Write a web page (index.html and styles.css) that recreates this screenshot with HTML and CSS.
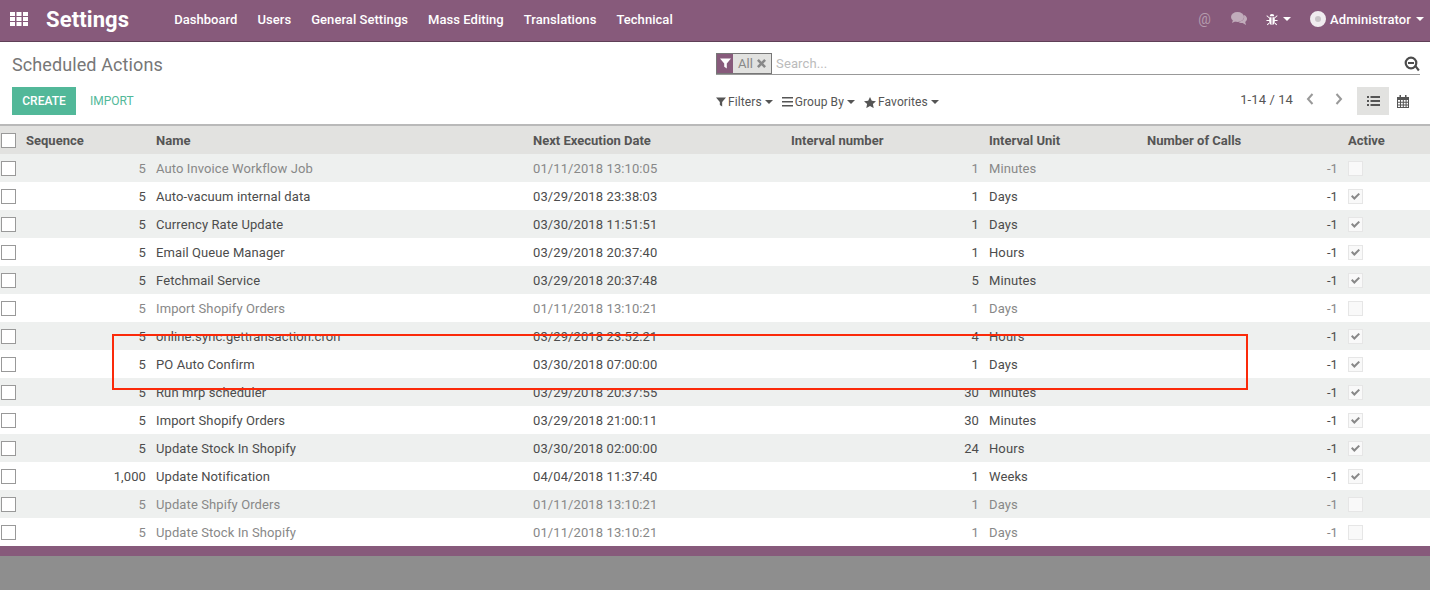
FILE: index.html
```html
<!DOCTYPE html>
<html lang="en">
<head>
    <meta charset="UTF-8">
    <meta name="viewport" content="width=device-width, initial-scale=1.0">
    <title>Scheduled Actions - Settings</title>
    <link rel="stylesheet" href="styles.css">
</head>
<body>
    <svg class="defs" width="0" height="0">
        <symbol id="caret" viewBox="0 0 8 4"><path d="M0 0h8L4 4z"/></symbol>
        <symbol id="filter" viewBox="0 0 12 12"><path d="M0 .5h12L7.4 6v5.5L4.6 9.6V6z"/></symbol>
        <symbol id="check" viewBox="0 0 12 10"><path d="M1 5l1.6-1.6L4.7 5.500 9.400 1 11 2.600 4.700 9z"/></symbol>
    </svg>

    <nav class="navbar">
        <svg class="apps" width="18" height="14" viewBox="0 0 18 14">
            <path d="M0 0h5v4H0zM6.500 0h5v4h-5zM13 0h5v4h-5zM0 5h5v4H0zM6.500 5h5v4h-5zM13 5h5v4h-5zM0 10h5v4H0zM6.500 10h5v4h-5zM13 10h5v4h-5z"/>
        </svg>
        <span class="brand">Settings</span>
        <ul class="menu">
            <li>Dashboard</li>
            <li>Users</li>
            <li>General Settings</li>
            <li>Mass Editing</li>
            <li>Translations</li>
            <li>Technical</li>
        </ul>
        <div class="systray">
            <span class="at">@</span>
            <svg class="tray-dim" width="16" height="14" viewBox="0 0 16 14">
                <ellipse cx="6.500" cy="5" rx="6.500" ry="5"/>
                <path d="M2 8l-1 3 4-2zM13.800 3.200C15.200 4.200 16 5.400 16 6.800c0 1.300-.7 2.400-1.800 3.200l.8 3-3.400-2.100c-1.700.1-3.400-.3-4.600-1.200 3.600.1 7.400-2.400 5.800-6.500z"/>
            </svg>
            <span class="tray-item">
                <svg width="12" height="13" viewBox="0 0 13 13">
                    <path d="M4 3a2.500 2.500 0 0 1 5 0zM3.500 4h2.500v8.500C4.500 12.200 3.500 11 3.500 9zM7 4h2.500v5c0 2-1 3.200-2.500 3.500zM1 2l2.500 2-.5.800-2.500-2zM12 2L9.500 4l.5.800 2.500-2zM.5 7h3v1h-3zM9.500 7h3v1h-3zM3 10l-2 2 .6.800L3.500 11zM10 10l2 2-.6.800L9.500 11z"/>
                </svg>
                <svg class="caret" width="8" height="4"><use href="#caret"/></svg>
            </span>
            <span class="tray-item user">
                <span class="avatar"></span>
                Administrator
                <svg class="caret" width="8" height="4"><use href="#caret"/></svg>
            </span>
        </div>
    </nav>

    <section class="panel">
        <h1 class="crumb">Scheduled Actions</h1>
        <div class="search">
            <div class="facet">
                <span class="facet-icon"><svg width="11" height="11"><use href="#filter"/></svg></span>
                <span class="facet-label">All</span>
                <svg class="facet-x" width="9" height="9" viewBox="0 0 9 9"><path d="M1.800 0L4.500 2.700 7.200 0 9 1.800 6.300 4.500 9 7.200 7.200 9 4.500 6.300 1.800 9 0 7.200 2.700 4.500 0 1.800z"/></svg>
            </div>
            <span class="search-hint">Search...</span>
            <svg class="search-go" width="16" height="16" viewBox="0 0 16 16">
                <circle cx="7" cy="7" r="5.300" fill="none" stroke-width="2.200"/>
                <path d="M4 6.100h6v1.800H4zM10.600 10.600l1.500-1.300 3.600 4.400-1.700 1.500z" stroke="none"/>
            </svg>
        </div>
        <div class="actions">
            <button class="btn-create" type="button">CREATE</button>
            <button class="btn-import" type="button">IMPORT</button>
        </div>
        <div class="tools">
            <div class="dropdowns">
                <span class="drop"><svg width="10" height="10"><use href="#filter"/></svg>Filters<svg class="caret" width="8" height="4"><use href="#caret"/></svg></span>
                <span class="drop"><svg width="11" height="10" viewBox="0 0 11 10"><path d="M0 0h11v1.600H0zM0 4h11v1.600H0zM0 8h11v1.600H0z"/></svg>Group By<svg class="caret" width="8" height="4"><use href="#caret"/></svg></span>
                <span class="drop"><svg width="12" height="11" viewBox="0 0 12 11"><path d="M6 0l1.800 3.800 4.200.5-3.100 2.800.8 4L6 9.100 2.300 11.100l.8-4L0 4.300l4.200-.5z"/></svg>Favorites<svg class="caret" width="8" height="4"><use href="#caret"/></svg></span>
            </div>
            <div class="pager">
                <span class="pager-value">1-14 / 14</span>
                <svg class="chev" width="8" height="12" viewBox="0 0 8 12"><path d="M6.500 1L2 6l4.500 5" fill="none" stroke-width="2"/></svg>
                <svg class="chev" width="8" height="12" viewBox="0 0 8 12"><path d="M1.500 1L6 6l-4.500 5" fill="none" stroke-width="2"/></svg>
            </div>
            <div class="views">
                <span class="view active">
                    <svg width="13" height="10" viewBox="0 0 13 10"><path d="M0 0h2v2H0zM3.500 0H13v2H3.500zM0 4h2v2H0zM3.500 4H13v2H3.500zM0 8h2v2H0zM3.500 8H13v2H3.500z"/></svg>
                </span>
                <span class="view cal">
                    <svg width="12" height="13" viewBox="0 0 12 13"><path d="M2.500 0h1.500v2h4V0h1.500v2H12v11H0V2h2.500zM1 5v1.800h2V5zm3 0v1.800h1.800V5zm2.800 0v1.800H8.600V5zm2.800 0v1.800H11V5zM1 7.700v1.800h2V7.700zm3 0v1.800h1.800V7.700zm2.800 0v1.800H8.600V7.700zm2.800 0v1.800H11V7.700zM1 10.400V12h2v-1.600zm3 0V12h1.800v-1.600zm2.800 0V12H8.600v-1.600zm2.800 0V12H11v-1.600z" fill-rule="evenodd"/></svg>
                </span>
            </div>
        </div>
    </section>

    <table class="list">
        <colgroup>
            <col class="c-select"><col class="c-seq"><col class="c-name"><col class="c-date">
            <col class="c-num"><col class="c-unit"><col class="c-calls"><col>
        </colgroup>
        <thead>
            <tr>
                <th class="select"><span class="box"></span></th>
                <th>Sequence</th>
                <th>Name</th>
                <th>Next Execution Date</th>
                <th>Interval number</th>
                <th>Interval Unit</th>
                <th>Number of Calls</th>
                <th>Active</th>
            </tr>
        </thead>
        <tbody>
            <tr class="off">
                <td class="select"><span class="box"></span></td><td class="num">5</td><td>Auto Invoice Workflow Job</td><td>01/11/2018 13:10:05</td><td class="num">1</td><td>Minutes</td><td class="num">-1</td><td><span class="flag"></span></td>
            </tr>
            <tr>
                <td class="select"><span class="box"></span></td><td class="num">5</td><td>Auto-vacuum internal data</td><td>03/29/2018 23:38:03</td><td class="num">1</td><td>Days</td><td class="num">-1</td><td><span class="flag"><svg width="11" height="9"><use href="#check"/></svg></span></td>
            </tr>
            <tr>
                <td class="select"><span class="box"></span></td><td class="num">5</td><td>Currency Rate Update</td><td>03/30/2018 11:51:51</td><td class="num">1</td><td>Days</td><td class="num">-1</td><td><span class="flag"><svg width="11" height="9"><use href="#check"/></svg></span></td>
            </tr>
            <tr>
                <td class="select"><span class="box"></span></td><td class="num">5</td><td>Email Queue Manager</td><td>03/29/2018 20:37:40</td><td class="num">1</td><td>Hours</td><td class="num">-1</td><td><span class="flag"><svg width="11" height="9"><use href="#check"/></svg></span></td>
            </tr>
            <tr>
                <td class="select"><span class="box"></span></td><td class="num">5</td><td>Fetchmail Service</td><td>03/29/2018 20:37:48</td><td class="num">5</td><td>Minutes</td><td class="num">-1</td><td><span class="flag"><svg width="11" height="9"><use href="#check"/></svg></span></td>
            </tr>
            <tr class="off">
                <td class="select"><span class="box"></span></td><td class="num">5</td><td>Import Shopify Orders</td><td>01/11/2018 13:10:21</td><td class="num">1</td><td>Days</td><td class="num">-1</td><td><span class="flag"></span></td>
            </tr>
            <tr>
                <td class="select"><span class="box"></span></td><td class="num">5</td><td>online.sync.gettransaction.cron</td><td>03/29/2018 23:52:21</td><td class="num">4</td><td>Hours</td><td class="num">-1</td><td><span class="flag"><svg width="11" height="9"><use href="#check"/></svg></span></td>
            </tr>
            <tr>
                <td class="select"><span class="box"></span></td><td class="num">5</td><td>PO Auto Confirm</td><td>03/30/2018 07:00:00</td><td class="num">1</td><td>Days</td><td class="num">-1</td><td><span class="flag"><svg width="11" height="9"><use href="#check"/></svg></span></td>
            </tr>
            <tr>
                <td class="select"><span class="box"></span></td><td class="num">5</td><td>Run mrp scheduler</td><td>03/29/2018 20:37:55</td><td class="num">30</td><td>Minutes</td><td class="num">-1</td><td><span class="flag"><svg width="11" height="9"><use href="#check"/></svg></span></td>
            </tr>
            <tr>
                <td class="select"><span class="box"></span></td><td class="num">5</td><td>Import Shopify Orders</td><td>03/29/2018 21:00:11</td><td class="num">30</td><td>Minutes</td><td class="num">-1</td><td><span class="flag"><svg width="11" height="9"><use href="#check"/></svg></span></td>
            </tr>
            <tr>
                <td class="select"><span class="box"></span></td><td class="num">5</td><td>Update Stock In Shopify</td><td>03/30/2018 02:00:00</td><td class="num">24</td><td>Hours</td><td class="num">-1</td><td><span class="flag"><svg width="11" height="9"><use href="#check"/></svg></span></td>
            </tr>
            <tr>
                <td class="select"><span class="box"></span></td><td class="num">1,000</td><td>Update Notification</td><td>04/04/2018 11:37:40</td><td class="num">1</td><td>Weeks</td><td class="num">-1</td><td><span class="flag"><svg width="11" height="9"><use href="#check"/></svg></span></td>
            </tr>
            <tr class="off">
                <td class="select"><span class="box"></span></td><td class="num">5</td><td>Update Shpify Orders</td><td>01/11/2018 13:10:21</td><td class="num">1</td><td>Days</td><td class="num">-1</td><td><span class="flag"></span></td>
            </tr>
            <tr class="off">
                <td class="select"><span class="box"></span></td><td class="num">5</td><td>Update Stock In Shopify</td><td>01/11/2018 13:10:21</td><td class="num">1</td><td>Days</td><td class="num">-1</td><td><span class="flag"></span></td>
            </tr>
        </tbody>
    </table>

    <div class="footer-bar"></div>
    <div class="backdrop"></div>

    <div class="callout"></div>
</body>
</html>
```

FILE: styles.css
```css
* {
    box-sizing: border-box;
}

html, body {
    height: 100%;
}

body {
    margin: 0;
    display: flex;
    flex-direction: column;
    overflow: hidden;
    font-family: Roboto, "Noto Sans", sans-serif;
    font-size: 13px;
    letter-spacing: 0.1px;
    color: #4c4c4c;
    background-color: #fff;
}

.defs {
    position: absolute;
}

/* top bar */
.navbar {
    display: flex;
    align-items: center;
    flex: none;
    height: 42px;
    padding: 0 6px 3px 10px;
    color: #fff;
    background-color: #875a7b;
    border-bottom: 1px solid #5f3f56;
}

.navbar svg {
    fill: currentColor;
}

.brand {
    margin-left: 18px;
    font-size: 22px;
    font-weight: 700;
    letter-spacing: 0.1px;
}

.menu {
    display: flex;
    gap: 20px;
    margin: 0 0 0 45px;
    padding: 0;
    list-style: none;
    font-weight: 500;
    letter-spacing: 0.05px;
}

.systray {
    display: flex;
    align-items: center;
    margin-left: auto;
}

.at {
    margin-right: 20px;
    font-size: 14px;
    color: #b59cae;
}

.tray-dim {
    margin-right: 19px;
    color: #c1acbb;
}

.tray-item {
    display: flex;
    align-items: center;
    gap: 5px;
}

.user {
    margin-left: 19px;
    font-weight: 500;
}

.avatar {
    width: 16px;
    height: 16px;
    margin-right: -1px;
    border: 5px solid #f0ecef;
    border-radius: 50%;
    background-color: #c9c4c8;
}

/* control panel */
.panel {
    display: grid;
    grid-template-columns: 716px 1fr;
    grid-template-rows: 32px 41px;
    flex: none;
    height: 84px;
    padding: 11px 10px 0 12px;
    border-bottom: 2px solid #b9b9b9;
}

.panel svg {
    fill: currentColor;
}

.crumb {
    margin: 0;
    font-size: 18px;
    font-weight: 400;
    line-height: 24px;
    color: #777;
}

.search {
    display: flex;
    align-items: center;
    height: 22px;
    margin-left: -12px;
    border-bottom: 1px solid #999;
}

.facet {
    display: flex;
    align-items: center;
    height: 21px;
    padding-right: 5px;
    border: 1px solid #777;
    background-color: #e2e2e0;
    color: #888;
}

.facet-icon {
    display: flex;
    align-items: center;
    justify-content: center;
    width: 16px;
    height: 19px;
    color: #fff;
    background-color: #875a7b;
}

.facet-label {
    margin-left: 5px;
}

.facet-x {
    margin-left: 4px;
}

.search-hint {
    margin-left: 4px;
    color: #bbb;
}

.search-go {
    margin-left: auto;
    color: #4c4c4c;
    stroke: currentColor;
}

.actions {
    display: flex;
    align-items: flex-start;
    padding-top: 2px;
}

button {
    height: 28px;
    padding: 0 10px;
    font: inherit;
    font-size: 12px;
    letter-spacing: 0;
    border: none;
    cursor: pointer;
}

.btn-create {
    width: 64px;
    color: #fff;
    font-weight: 500;
    background-color: #52b899;
}

.btn-import {
    margin-left: 4px;
    color: #52b899;
    background: none;
}

.tools {
    display: flex;
    align-items: flex-start;
    margin-left: -12px;
    padding-top: 2px;
}

.dropdowns {
    display: flex;
    gap: 9px;
    padding-top: 8px;
    font-size: 12px;
    color: #555;
}

.drop {
    display: flex;
    align-items: center;
    gap: 2px;
}

.drop .caret {
    margin-left: 1px;
}

.pager {
    display: flex;
    align-items: center;
    margin-left: auto;
    height: 24px;
    color: #555;
}

.pager-value {
    margin-right: 13px;
}

.chev {
    margin-right: 21px;
    fill: none !important;
    stroke: #999;
}

.chev:last-child {
    margin-right: 14px;
}

.views {
    display: flex;
    color: #555;
}

.view {
    display: flex;
    align-items: center;
    justify-content: center;
    width: 32px;
    height: 28px;
}

.view.active {
    background-color: #e2e2e0;
}

.view.cal {
    width: 31px;
    padding-right: 3px;
}

/* list */
.list {
    flex: none;
    width: 100%;
    border-collapse: collapse;
    table-layout: fixed;
}

.c-select { width: 21px; }
.c-seq { width: 130px; }
.c-name { width: 377px; }
.c-date { width: 258px; }
.c-num { width: 198px; }
.c-unit { width: 158px; }
.c-calls { width: 201px; }

th, td {
    height: 28px;
    padding: 0 5px;
    text-align: left;
    white-space: nowrap;
}

th {
    font-weight: 700;
    letter-spacing: 0;
    color: #555;
    background-color: #e2e2e0;
}

tbody tr:nth-child(odd) {
    background-color: #eef0ef;
}

.off td {
    color: #888;
}

.num {
    text-align: right;
}

th.select, td.select {
    padding: 0 0 0 1px;
}

.box {
    display: block;
    width: 15px;
    height: 15px;
    border: 1px solid #999;
    background-color: #fff;
}

.flag {
    display: flex;
    align-items: center;
    justify-content: center;
    width: 15px;
    height: 15px;
    border: 1px solid #e6e6e6;
    background-color: #f9f9f9;
    fill: #888;
}

.footer-bar {
    flex: none;
    height: 10px;
    background-color: #875a7b;
}

.backdrop {
    flex: 1;
    background-color: #8e8e8e;
}

/* annotation drawn over the screenshot */
.callout {
    position: absolute;
    left: 112px;
    top: 334px;
    width: 1136px;
    height: 56px;
    border: 2px solid #fb2a0a;
}
```
